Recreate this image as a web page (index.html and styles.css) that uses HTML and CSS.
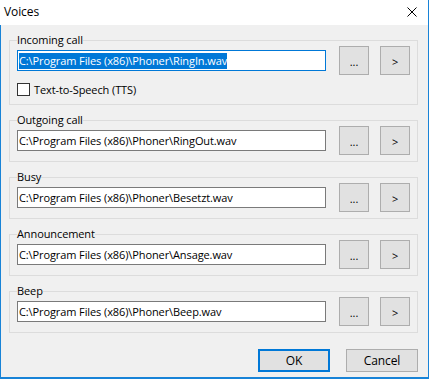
FILE: index.html
```html
<!DOCTYPE html>
<html lang="en">
<head>
    <meta charset="UTF-8">
    <title>Voices</title>
    <link rel="stylesheet" href="styles.css">
</head>
<body>
    <div class="window">
        <div class="titlebar">
            <span class="title">Voices</span>
            <svg class="close" width="10" height="10" viewBox="0 0 10 10">
                <path d="M0.5 0.5 L9.5 9.5 M9.5 0.5 L0.5 9.5" stroke="#000" stroke-width="1" fill="none"/>
            </svg>
        </div>

        <div class="content">
            <fieldset class="group first">
                <legend>Incoming call</legend>
                <div class="row">
                    <div class="field focused"><span class="selected">C:\Program Files (x86)\Phoner\RingIn.wav</span></div>
                    <button class="btn small">...</button>
                    <button class="btn small play">&gt;</button>
                </div>
                <label class="check">
                    <span class="box"></span>
                    Text-to-Speech (TTS)
                </label>
            </fieldset>

            <fieldset class="group">
                <legend>Outgoing call</legend>
                <div class="row">
                    <div class="field">C:\Program Files (x86)\Phoner\RingOut.wav</div>
                    <button class="btn small">...</button>
                    <button class="btn small play">&gt;</button>
                </div>
            </fieldset>

            <fieldset class="group">
                <legend>Busy</legend>
                <div class="row">
                    <div class="field">C:\Program Files (x86)\Phoner\Besetzt.wav</div>
                    <button class="btn small">...</button>
                    <button class="btn small play">&gt;</button>
                </div>
            </fieldset>

            <fieldset class="group">
                <legend>Announcement</legend>
                <div class="row">
                    <div class="field">C:\Program Files (x86)\Phoner\Ansage.wav</div>
                    <button class="btn small">...</button>
                    <button class="btn small play">&gt;</button>
                </div>
            </fieldset>

            <fieldset class="group">
                <legend>Beep</legend>
                <div class="row">
                    <div class="field">C:\Program Files (x86)\Phoner\Beep.wav</div>
                    <button class="btn small">...</button>
                    <button class="btn small play">&gt;</button>
                </div>
            </fieldset>

            <div class="actions">
                <button class="btn wide default">OK</button>
                <button class="btn wide">Cancel</button>
            </div>
        </div>
    </div>
</body>
</html>
```

FILE: styles.css
```css
:root {
    --bg: #f0f0f0;
    --frame: #1883d7;
    --accent: #0078d7;
    --group-line: #dcdcdc;
    --btn-bg: #e1e1e1;
    --btn-border: #adadad;
    --field-border: #7a7a7a;
}

* {
    box-sizing: border-box;
}

body {
    margin: 0;
    font-family: "Open Sans", "Noto Sans", sans-serif;
    font-size: 11px;
    letter-spacing: -0.1px;
    color: #000;
}

.window {
    width: 429px;
    height: 379px;
    display: flex;
    flex-direction: column;
    border-right: 1px solid var(--frame);
}

.titlebar {
    height: 25px;
    background: #fff;
    display: flex;
    align-items: center;
    justify-content: space-between;
    padding: 0 11px 0 4px;
}

.title {
    font-size: 12px;
    margin-top: -2px;
}

.close {
    margin-top: -2px;
}

.content {
    flex: 1;
    background: var(--bg);
    border-left: 1px solid var(--frame);
    border-bottom: 2px solid var(--frame);
    padding: 9px 10px 0 8px;
    display: flex;
    flex-direction: column;
}

.group {
    margin: 0 0 9px 0;
    border: 1px solid var(--group-line);
    padding: 0 7px 6px 7px;
    min-width: 0;
}

.group.first {
    padding-bottom: 8px;
}

.group legend {
    padding: 0;
    line-height: 12px;
    height: 12px;
}

.row {
    display: flex;
    align-items: center;
    height: 29px;
}

.field {
    width: 309px;
    height: 21px;
    background: #fff;
    border: 1px solid var(--field-border);
    padding: 1px 1px;
    line-height: 17px;
    white-space: nowrap;
    overflow: hidden;
}

.field.focused {
    border-color: var(--accent);
}

.selected {
    background: var(--accent);
    color: #fff;
    display: inline-block;
    line-height: 16px;
    margin-top: 1px;
}

.btn {
    font-family: inherit;
    font-size: 11px;
    letter-spacing: inherit;
    color: #000;
    background: var(--btn-bg);
    border: 1px solid var(--btn-border);
    padding: 0;
    margin: 0;
}

.btn.small {
    width: 30px;
    height: 29px;
    margin-left: 13px;
    padding-top: 2px;
}

.btn.small.play {
    margin-left: 11px;
}

.check {
    display: flex;
    align-items: center;
    gap: 4px;
    margin-top: 8px;
    height: 13px;
}

.box {
    width: 13px;
    height: 13px;
    background: #fff;
    border: 1px solid #333;
}

.actions {
    display: flex;
    justify-content: flex-end;
    gap: 16px;
    margin-top: 7px;
}

.btn.wide {
    width: 72px;
    height: 23px;
    font-size: 12px;
}

.btn.default {
    border: 2px solid var(--accent);
}
```
